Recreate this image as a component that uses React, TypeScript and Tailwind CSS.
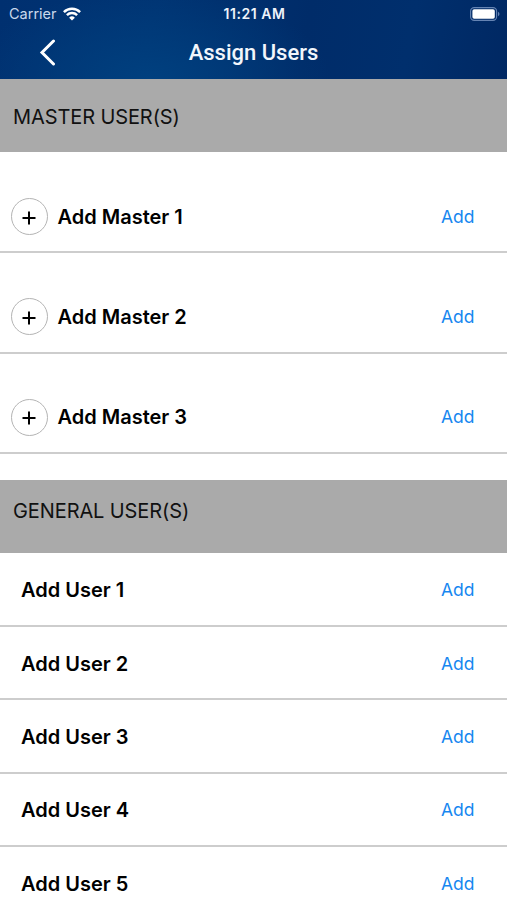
import { useState } from 'react';

interface Slot {
  id: string;
  label: string;
}

const masterUsers: Slot[] = [
  { id: 'm1', label: 'Add Master 1' },
  { id: 'm2', label: 'Add Master 2' },
  { id: 'm3', label: 'Add Master 3' },
];

const generalUsers: Slot[] = [
  { id: 'u1', label: 'Add User 1' },
  { id: 'u2', label: 'Add User 2' },
  { id: 'u3', label: 'Add User 3' },
  { id: 'u4', label: 'Add User 4' },
  { id: 'u5', label: 'Add User 5' },
];

function StatusBar() {
  return (
    <div className="grid grid-cols-3 items-center h-[27px] pl-[9px] pr-[7px] text-[#eef3fa]">
      <div className="flex items-center gap-[6px]">
        <span className="pt-px text-[14.5px] leading-none text-[#c9d8ec]">Carrier</span>
        <svg width="18" height="14" viewBox="0 0 18 14" fill="none" stroke="#fff" strokeWidth="2.5">
          <path d="M0.9 5.1a11.6 11.6 0 0 1 16.2 0" />
          <path d="M3.9 8.2a7.3 7.3 0 0 1 10.2 0" />
          <path d="M9 13.6L6.1 10.7a4.2 4.2 0 0 1 5.8 0z" fill="#fff" stroke="none" />
        </svg>
      </div>
      <span className="text-center text-[14px] leading-none font-semibold tracking-[0.55px] whitespace-nowrap">11:21 AM</span>
      <svg className="justify-self-end" width="30" height="14" viewBox="0 0 30 14" fill="none">
        <rect x="0.6" y="0.6" width="26" height="12.8" rx="3.6" stroke="#6584b3" strokeWidth="1.1" />
        <rect x="2.4" y="2.3" width="22.4" height="9.4" rx="1.8" fill="#fff" />
        <path d="M28 4.8c2 .8 2 3.6 0 4.4z" fill="#6584b3" />
      </svg>
    </div>
  );
}

function AddButton({ onClick }: { onClick: () => void }) {
  return (
    <button onClick={onClick} className="text-[17.5px] leading-[24px] text-[#1687f0]">
      Add
    </button>
  );
}

export default function App() {
  const [selected, setSelected] = useState('');

  return (
    <div className="w-full h-[900px] overflow-hidden bg-white text-black font-['Inter',sans-serif]">
      {/* Header */}
      <header className="h-[79px] bg-[radial-gradient(ellipse_180px_90px_at_150px_79px,#00407f_0%,transparent_100%),linear-gradient(100deg,#003070_0%,#003473_30%,#002c69_60%,#002f6d_80%,#002863_100%)]">
        <StatusBar />
        <div className="grid grid-cols-[80px_1fr_80px] items-center h-[50px]">
          <button aria-label="Back" className="pl-[39px]">
            <svg width="18" height="28" viewBox="0 0 18 28" fill="none" stroke="#fff" strokeWidth="3" strokeLinecap="round">
              <path d="M14.5 3L3 14.5L14.5 26" />
            </svg>
          </button>
          <h1 className="pt-px text-center text-[22px] leading-[28px] font-medium text-[#f2f6fc] font-['Roboto',sans-serif]">
            Assign Users
          </h1>
        </div>
      </header>

      {/* Master users */}
      <h2 className="h-[73px] pl-[13px] pt-[25px] bg-[#aaaaaa] text-[20px] leading-[26px] tracking-[-0.1px] text-[#111]">
        MASTER USER(S)
      </h2>
      <ul className="pt-px">
        {masterUsers.map((user) => (
          <li
            key={user.id}
            aria-current={selected === user.id}
            className="flex items-center justify-between h-[100.25px] pt-[29px] pl-[10.5px] pr-[32.5px] border-b-2 border-[#cdcdcd]"
          >
            <div className="flex items-center gap-[10px]">
              <span className="flex items-center justify-center size-[37px] pt-[2px] rounded-full border-[1.5px] border-[#b4b4b4]">
                <svg width="14" height="14" viewBox="0 0 14 14" stroke="#000" strokeWidth="2">
                  <path d="M7 0.5v13M0.5 7h13" />
                </svg>
              </span>
              <span className="text-[20px] leading-[26px] font-semibold">{user.label}</span>
            </div>
            <AddButton onClick={() => setSelected(user.id)} />
          </li>
        ))}
      </ul>

      {/* General users */}
      <h2 className="h-[73px] mt-[26px] pl-[13px] pt-[18px] bg-[#aaaaaa] text-[20px] leading-[26px] tracking-[-0.1px] text-[#111]">
        GENERAL USER(S)
      </h2>
      <ul className="pt-px">
        {generalUsers.map((user) => (
          <li
            key={user.id}
            aria-current={selected === user.id}
            className="flex items-center justify-between h-[73.3px] pt-[2px] pl-[21px] pr-[32.5px] border-b-2 border-[#cdcdcd]"
          >
            <span className="text-[20px] leading-[26px] font-semibold">{user.label}</span>
            <AddButton onClick={() => setSelected(user.id)} />
          </li>
        ))}
      </ul>
    </div>
  );
}
